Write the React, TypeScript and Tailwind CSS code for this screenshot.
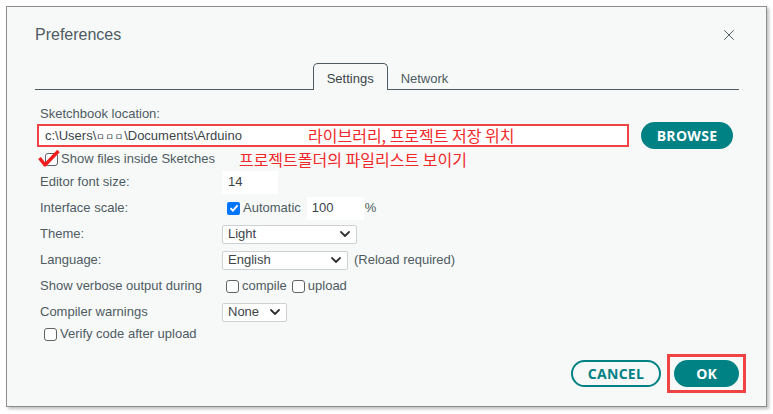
import { X } from 'lucide-react';

const label = "w-[182px] shrink-0";

function Chevron() {
  return (
    <svg width="10" height="6" viewBox="0 0 10 6" className="shrink-0">
      <path d="M1 1l4 4 4-4" fill="none" stroke="#333" strokeWidth="1.8" strokeLinecap="round" strokeLinejoin="round" />
    </svg>
  );
}

function Select({ value, width }: { value: string; width: string }) {
  return (
    <div className={`${width} h-[19px] bg-white border border-[#cdd1d3] rounded-[2px] flex items-center justify-between pl-[5px] pr-[6px] text-[#3c4448]`}>
      <span>{value}</span>
      <Chevron />
    </div>
  );
}

function Box({ checked = false, className = "" }: { checked?: boolean; className?: string }) {
  if (checked) {
    return (
      <div className={`w-[13px] h-[13px] rounded-[2px] bg-[#0075ff] flex items-center justify-center shrink-0 ${className}`}>
        <svg width="10" height="10" viewBox="0 0 10 10">
          <path d="M1.5 5.2l2.4 2.4L8.6 2.4" fill="none" stroke="#fff" strokeWidth="1.9" />
        </svg>
      </div>
    );
  }
  return <div className={`w-[13px] h-[13px] rounded-[3px] border border-[#5f6366] bg-white shrink-0 ${className}`} />;
}

export default function App() {
  return (
    <div className="w-[773px] h-[414px] bg-white pt-[6px] pl-[6px] font-['Liberation_Sans',Arial,sans-serif] text-[13px] text-[#4e5b61]">
      <div className="w-[761px] h-[401px] bg-[#f7f9f9] border border-[#8d8d8d] shadow-[2px_2px_3px_rgba(0,0,0,0.25)] flex flex-col pl-[28px] pr-[27px]">
        {/* Header */}
        <div className="h-[56px] pt-[18px] flex justify-between pr-[1px]">
          <span className="text-[16px] leading-[20px] text-[#4e5b61]">Preferences</span>
          <X className="w-[18px] h-[18px] mt-[1px] text-[#4e5b61]" strokeWidth={1.3} />
        </div>

        {/* Tabs */}
        <div className="h-[27px] flex justify-center border-b border-[#4e5b61]">
          <div className="-mb-px h-[27px] px-[13px] pt-[5px] border border-b-0 border-[#4e5b61] rounded-t-[5px] bg-[#f7f9f9] text-[#3c4448]">
            Settings
          </div>
          <div className="px-[13px] pt-[6px] text-[#4e5b61]">Network</div>
        </div>

        {/* Content */}
        <div className="pl-[5px]">
          <div className="mt-[16px] h-[16px] leading-[16px]">Sketchbook location:</div>
          <div className="flex items-center h-[27px]">
            <div className="relative -ml-[3px] w-[592px] h-[23px] bg-white border-2 border-[#f04343] flex items-center pl-[6px] text-[#3c4448]">
              <span>c:\Users\<span className="text-[9px] tracking-[1px] font-['Noto_Sans_CJK_KR',sans-serif]">ㅁㅁㅁ</span>\Documents\Arduino</span>
              <span className="absolute left-[269px] top-[-1px] text-[16px] leading-[20px] text-[#f02828] font-['Noto_Sans_CJK_KR',sans-serif]">
                라이브러리, 프로젝트 저장 위치
              </span>
            </div>
            <button className="ml-[12px] w-[92px] h-[27px] rounded-full bg-[#008184] text-white font-['Open_Sans',sans-serif] font-bold text-[14px] tracking-[0.3px]">
              BROWSE
            </button>
          </div>

          <div className="h-[20px] flex items-center">
            <div className="relative ml-[5px] mr-[3px]">
              <Box />
              <svg width="24" height="19" viewBox="0 0 24 19" className="absolute left-[-8px] top-[-4px]">
                <path d="M2.5 9l5.5 7L21.5 2" fill="none" stroke="#f01e1e" strokeWidth="3.4" strokeLinejoin="round" />
              </svg>
            </div>
            <span>Show files inside Sketches</span>
            <span className="ml-[24px] text-[16px] leading-[20px] text-[#f02828] font-['Noto_Sans_CJK_KR',sans-serif]">
              프로젝트폴더의 파일리스트 보이기
            </span>
          </div>

          <div className="h-[26px] flex items-center">
            <span className={label}>Editor font size:</span>
            <div className="w-[56px] h-[23px] bg-white flex items-center pl-[6px] text-[#3c4448]">14</div>
          </div>

          <div className="h-[26px] flex items-center">
            <span className={label}>Interface scale:</span>
            <Box checked className="ml-[5px]" />
            <span className="ml-[3px]">Automatic</span>
            <div className="ml-[6px] w-[57px] h-[23px] bg-white flex items-center pl-[5px] text-[#3c4448]">100</div>
            <span className="ml-[1px]">%</span>
          </div>

          <div className="h-[26px] flex items-center">
            <span className={label}>Theme:</span>
            <Select value="Light" width="w-[135px]" />
          </div>

          <div className="h-[26px] flex items-center">
            <span className={label}>Language:</span>
            <Select value="English" width="w-[126px]" />
            <span className="ml-[6px]">(Reload required)</span>
          </div>

          <div className="h-[26px] flex items-center">
            <span className={label}>Show verbose output during</span>
            <Box className="ml-[4px]" />
            <span className="ml-[3px]">compile</span>
            <Box className="ml-[5px]" />
            <span className="ml-[3px]">upload</span>
          </div>

          <div className="h-[26px] flex items-center">
            <span className={label}>Compiler warnings</span>
            <Select value="None" width="w-[65px]" />
          </div>

          <div className="h-[18px] flex items-center">
            <Box className="ml-[4px]" />
            <span className="ml-[3px]">Verify code after upload</span>
          </div>
        </div>

        {/* Footer */}
        <div className="mt-auto mb-[13px] flex justify-end items-center">
          <button className="w-[90px] h-[27px] rounded-full border-2 border-[#008184] text-[#008184] font-['Open_Sans',sans-serif] font-bold text-[14px] tracking-[0.3px]">
            CANCEL
          </button>
          <div className="ml-[6px] px-[4px] py-[3px] border-[3px] border-[#f04343] -mr-[7px]">
            <button className="block w-[65px] h-[27px] rounded-full bg-[#008184] text-white font-['Open_Sans',sans-serif] font-bold text-[14px]">
              OK
            </button>
          </div>
        </div>
      </div>
    </div>
  );
}
